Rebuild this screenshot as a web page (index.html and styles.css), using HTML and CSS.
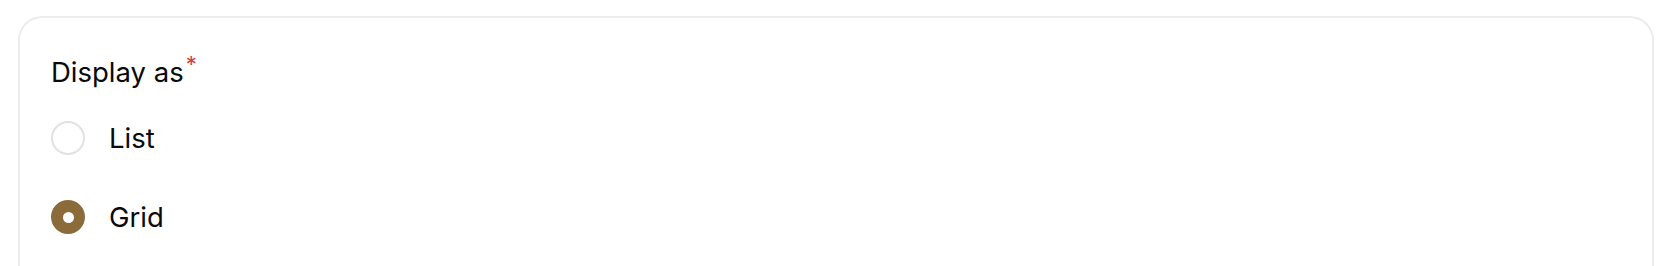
FILE: index.html
```html
<!DOCTYPE html>
<html lang="en">
<head>
<meta charset="utf-8">
<link rel="stylesheet" href="styles.css">
</head>
<body>
<div class="card">
  <fieldset class="field">
    <div class="label">Display as<span class="req">*</span></div>
    <div class="options">
      <label class="option">
        <span class="radio"></span>
        <span class="option-text">List</span>
      </label>
      <label class="option">
        <span class="radio checked"></span>
        <span class="option-text">Grid</span>
      </label>
    </div>
  </fieldset>
</div>
</body>
</html>
```
FILE: styles.css
```css
html, body {
  margin: 0;
  padding: 0;
  background: #ffffff;
  overflow: hidden;
}
body {
  font-family: "Inter", "Liberation Sans", sans-serif;
  color: #0a0a0a;
}
.card {
  margin: 16px 18px 0;
  border: 2px solid #ececec;
  border-bottom: none;
  border-radius: 24px 24px 0 0;
  padding: 38px 31px 0;
  min-height: 400px;
  box-sizing: border-box;
}
.field {
  border: none;
  margin: 0;
  padding: 0;
}
.label {
  font-size: 27.5px;
  font-weight: 400;
  line-height: 32px;
  color: #0a0a0a;
}
.req {
  color: #d93a3a;
  font-size: 22px;
  vertical-align: top;
  line-height: 16px;
  margin-left: 2px;
}
.options {
  display: flex;
  flex-direction: column;
  gap: 31px;
  margin-top: 26px;
}
.option {
  display: flex;
  align-items: center;
  gap: 24px;
  height: 48px;
}
.radio {
  width: 34px;
  height: 34px;
  box-sizing: border-box;
  border: 2px solid #e2e2e2;
  border-radius: 50%;
  background: #ffffff;
  display: flex;
  align-items: center;
  justify-content: center;
  flex: none;
}
.radio.checked {
  border: none;
  background: #8b6b3a;
}
.radio.checked::after {
  content: "";
  width: 11px;
  height: 11px;
  border-radius: 50%;
  background: #ffffff;
}
.option-text {
  font-size: 27.5px;
  font-weight: 400;
  line-height: 32px;
  color: #0a0a0a;
}
```
